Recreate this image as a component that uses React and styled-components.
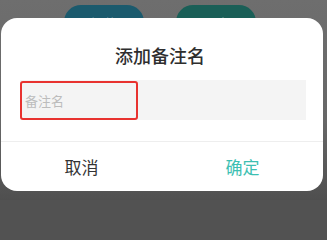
import React from "react";
import styled, { createGlobalStyle } from "styled-components";

const Global = createGlobalStyle`
  html, body { margin: 0; padding: 0; }
  html { background: #525252; }
  body {
    width: 327px;
    height: 200px;
    overflow: hidden;
    background: linear-gradient(to bottom, #6e6e6e 0%, #676767 60%, #4f4f4f 100%);
    font-family: "Noto Sans CJK SC", "Noto Sans", sans-serif;
  }
`;

const Page = styled.div`
  position: relative;
  width: 327px;
  height: 200px;
`;

const BackRow = styled.div`
  display: flex;
  padding: 5px 0 0 64px;
  gap: 32px;
`;

const PillButton = styled.div`
  width: 80px;
  height: 34px;
  border-radius: 17px;
  background: ${(p) => p.$bg};
  color: rgba(255, 255, 255, 0.3);
  font-size: 14px;
  display: flex;
  justify-content: center;
  padding-top: 8px;
  box-sizing: border-box;
`;

const Dialog = styled.div`
  position: absolute;
  top: 18px;
  left: 1px;
  width: 322px;
  height: 173px;
  background: #fff;
  border-radius: 16px;
  display: flex;
  flex-direction: column;
  overflow: hidden;
`;

const Title = styled.div`
  padding-top: 25px;
  height: 25px;
  line-height: 25px;
  text-align: center;
  font-size: 18px;
  font-weight: 500;
  color: #2e2e2e;
  padding-right: 4px;
`;

const InputWrap = styled.div`
  position: relative;
  margin: 12px 17px 0 19px;
  height: 40px;
  background: #f4f4f4;
  display: flex;
  align-items: center;
`;

const Placeholder = styled.span`
  padding-left: 5px;
  font-size: 13px;
  color: #bcbcbc;
`;

const Highlight = styled.div`
  position: absolute;
  left: 0;
  top: 1px;
  width: 118px;
  height: 39px;
  border: 2px solid #e8322f;
  border-radius: 3px;
  box-sizing: border-box;
`;

const Divider = styled.div`
  margin-top: 21px;
  height: 1px;
  background: #eeeeee;
`;

const Actions = styled.div`
  flex: 1;
  display: flex;
`;

const Action = styled.div`
  flex: 1;
  display: flex;
  align-items: center;
  justify-content: center;
  font-size: 17px;
  color: ${(p) => (p.$primary ? "#3dbfb2" : "#333333")};
  padding-bottom: 1px;
`;

export default function App() {
  return (
    <>
      <Global />
      <Page>
        <BackRow>
          <PillButton $bg="#1b5a6d">拒绝</PillButton>
          <PillButton $bg="#1a5f57">同意</PillButton>
        </BackRow>
        <Dialog>
          <Title>添加备注名</Title>
          <InputWrap>
            <Placeholder>备注名</Placeholder>
            <Highlight />
          </InputWrap>
          <Divider />
          <Actions>
            <Action>取消</Action>
            <Action $primary>确定</Action>
          </Actions>
        </Dialog>
      </Page>
    </>
  );
}
